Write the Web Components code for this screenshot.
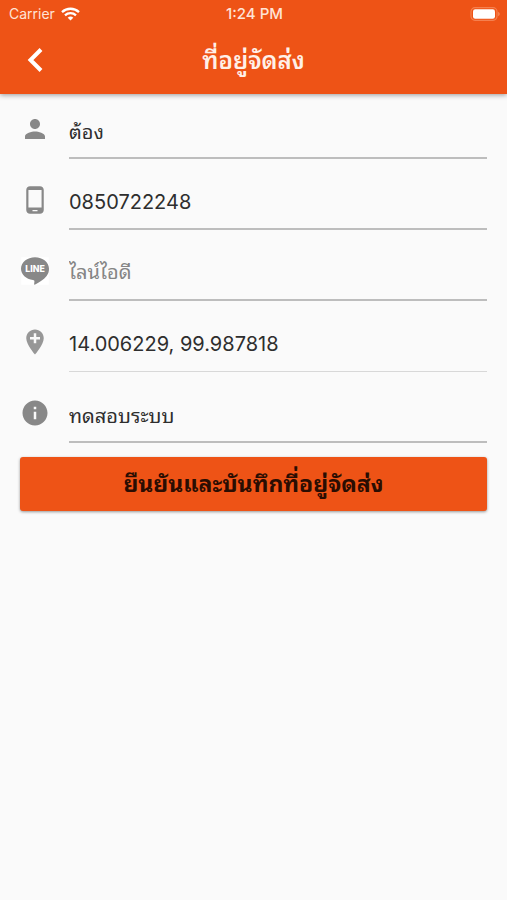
<!DOCTYPE html>
<html lang="th">
<head>
<meta charset="utf-8">
<meta name="viewport" content="width=device-width, initial-scale=1">
<title>ที่อยู่จัดส่ง</title>
<style>
body {
    margin: 0;
    min-height: 100vh;
    background-color: #fafafa;
    color: #2e2e2e;
    font-family: Inter, 'Noto Sans Thai Looped', Loma, Garuda, Waree, sans-serif;
}
</style>
</head>
<body>
<address-page></address-page>

<script>
const icons = {
    person: '<path d="M12 12c2.21 0 4-1.79 4-4s-1.79-4-4-4-4 1.79-4 4 1.79 4 4 4zm0 2c-2.67 0-8 1.34-8 4v2h16v-2c0-2.66-5.33-4-8-4z"/>',
    phone: '<path d="M16 1H8C6.34 1 5 2.34 5 4v16c0 1.66 1.34 3 3 3h8c1.66 0 3-1.34 3-3V4c0-1.66-1.34-3-3-3zm-2 20h-4v-1h4v1zm3.25-3H6.75V4h10.500v14z"/>',
    line: `<path fill="#fff" d="M1 1h22v22H1z"/>
        <path d="M12 1C5.800 1 .8 5 .8 10.200c0 4.600 4 8.200 9.600 9 .9.200 1.300.6 1.100 1.500l-.2 1.700c0 .5.300.7.800.4 2.600-1.400 6.900-4 9.200-6.900 1.300-1.600 1.900-3.400 1.900-5.700C23.200 5 18.200 1 12 1z"/>
        <text x="12" y="12.500" text-anchor="middle" font-size="7" font-weight="800" fill="#fff">LINE</text>`,
    place: '<path fill="#979797" d="M12 2C8.140 2 5 5.140 5 9c0 5.250 7 13 7 13s7-7.750 7-13c0-3.860-3.140-7-7-7zm4 8h-3v3h-2v-3H8V8h3V5h2v3h3v2z"/>',
    info: '<path d="M12 2C6.480 2 2 6.480 2 12s4.480 10 10 10 10-4.480 10-10S17.520 2 12 2zm1 15h-2v-6h2v6zm0-8h-2V7h2v2z"/>'
};

const statusTmpl = document.createElement('template');
statusTmpl.innerHTML = `
<style>
:host {
    display: grid;
    grid-template-columns: 1fr auto 1fr;
    align-items: center;
    height: 27px;
    padding: 0 7px 0 9px;
    font-size: 14px;
    line-height: 27px;
    color: #ffe3d6;
}
.carrier {
    display: flex;
    align-items: center;
    gap: 6px;
}
.time {
    font-size: 15px;
    font-weight: 500;
}
.battery {
    justify-self: end;
}
svg {
    display: block;
}
</style>
<div class="carrier">
    <span>Carrier</span>
    <svg width="19" height="14" viewBox="0 0 19 14" fill="none" stroke="#fff" stroke-width="2.300" aria-hidden="true">
        <path d="M1 5.200C5.800.600 13.200.600 18 5.200"/>
        <path d="M4 8.300c3.100-2.900 7.900-2.900 11 0"/>
        <path d="M6.700 10.700c1.600-1.500 4-1.500 5.600 0L9.500 13.600z" fill="#fff" stroke="none"/>
    </svg>
</div>
<span class="time">1:24 PM</span>
<svg class="battery" width="31" height="14" viewBox="0 0 31 14" aria-hidden="true">
    <rect x="2" y="0.700" width="26" height="12.600" rx="4" fill="none" stroke="#f5804f" stroke-width="1.200"/>
    <rect x="4" y="2.200" width="22" height="9.600" rx="2.200" fill="#fff"/>
    <path d="M29 4.800c2.400.9 2.400 3.500 0 4.400z" fill="#f5804f"/>
</svg>
`;

class StatusBar extends HTMLElement {
    constructor() {
        super();
        this.attachShadow({ mode: 'open' });
        this.shadowRoot.appendChild(statusTmpl.content.cloneNode(true));
    }
}
window.customElements.define('status-bar', StatusBar);

const appBarTmpl = document.createElement('template');
appBarTmpl.innerHTML = `
<style>
:host {
    display: block;
    background-color: #ee5316;
    box-shadow: 0 1px 5px rgba(0, 0, 0, .4);
}
nav {
    display: grid;
    grid-template-columns: 70px 1fr 70px;
    align-items: center;
    height: 67px;
}
button {
    display: grid;
    place-items: center;
    height: 60px;
    padding: 0;
    border: 0;
    background: none;
    color: #fff;
    cursor: pointer;
}
h1 {
    margin: 0;
    font-size: 24px;
    font-weight: 600;
    line-height: 36px;
    text-align: center;
    color: #fff0e8;
}
</style>
<status-bar></status-bar>
<nav>
    <button type="button" aria-label="ย้อนกลับ">
        <svg width="30" height="30" viewBox="0 0 30 30" fill="none" stroke="currentColor" stroke-width="4" aria-hidden="true">
            <path d="M21 3.500 10.500 14 21 24.500"/>
        </svg>
    </button>
    <h1><slot></slot></h1>
</nav>
`;

class AppBar extends HTMLElement {
    constructor() {
        super();
        this.attachShadow({ mode: 'open' });
        this.shadowRoot.appendChild(appBarTmpl.content.cloneNode(true));
    }
}
window.customElements.define('app-bar', AppBar);

const fieldTmpl = document.createElement('template');
fieldTmpl.innerHTML = `
<style>
:host {
    display: grid;
    grid-template-columns: 30px 1fr;
    column-gap: 19px;
    align-items: start;
}
label {
    padding-top: 8px;
}
svg {
    display: block;
    fill: #888;
}
input {
    box-sizing: border-box;
    width: 100%;
    height: 53px;
    padding: 0 0 4px;
    border: 0;
    border-bottom: 2px solid #bdbdbd;
    border-radius: 0;
    outline: 0;
    background: none;
    color: inherit;
    font: inherit;
    font-size: 20px;
    line-height: 24px;
}
:host([numeric]) input {
    padding-bottom: 2px;
}
:host([muted]) input {
    border-bottom: 1px solid #d8d8d8;
}
input::placeholder {
    color: #858585;
    opacity: 1;
}
</style>
<label for="field"><svg width="30" height="30" viewBox="0 0 24 24" aria-hidden="true"></svg></label>
<input id="field" type="text">
`;

class IconField extends HTMLElement {
    constructor() {
        super();
        this.attachShadow({ mode: 'open' });
        this.shadowRoot.appendChild(fieldTmpl.content.cloneNode(true));
    }

    connectedCallback() {
        const input = this.shadowRoot.querySelector('input');
        this.shadowRoot.querySelector('svg').innerHTML = icons[this.getAttribute('icon')];
        input.value = this.getAttribute('value') || '';
        input.placeholder = this.getAttribute('placeholder') || '';
        input.setAttribute('aria-label', this.getAttribute('label'));
    }
}
window.customElements.define('icon-field', IconField);

const submitTmpl = document.createElement('template');
submitTmpl.innerHTML = `
<style>
:host {
    display: block;
}
button {
    display: block;
    width: 100%;
    height: 54px;
    padding: 0;
    border: 0;
    border-radius: 3px;
    background-color: #ee5316;
    box-shadow: 0 1px 3px rgba(0, 0, 0, .4);
    color: #2a0d02;
    font: inherit;
    font-size: 23px;
    font-weight: 700;
    line-height: 36px;
    cursor: pointer;
}
</style>
<button type="button"><slot></slot></button>
`;

class SubmitButton extends HTMLElement {
    constructor() {
        super();
        this.attachShadow({ mode: 'open' });
        this.shadowRoot.appendChild(submitTmpl.content.cloneNode(true));
    }
}
window.customElements.define('submit-button', SubmitButton);

const pageTmpl = document.createElement('template');
pageTmpl.innerHTML = `
<style>
:host {
    display: block;
}
main {
    padding: 12px 20px;
}
.fields {
    display: grid;
    gap: 18px;
    margin-bottom: 14px;
}
</style>
<app-bar>ที่อยู่จัดส่ง</app-bar>
<main>
    <div class="fields">
        <icon-field icon="person" label="ชื่อ" value="ต้อง"></icon-field>
        <icon-field icon="phone" label="โทรศัพท์" value="0850722248" numeric></icon-field>
        <icon-field icon="line" label="ไลน์ไอดี" placeholder="ไลน์ไอดี"></icon-field>
        <icon-field icon="place" label="พิกัด" value="14.006229, 99.987818" numeric muted></icon-field>
        <icon-field icon="info" label="รายละเอียด" value="ทดสอบระบบ"></icon-field>
    </div>
    <submit-button>ยืนยันและบันทึกที่อยู่จัดส่ง</submit-button>
</main>
`;

class AddressPage extends HTMLElement {
    constructor() {
        super();
        this.attachShadow({ mode: 'open' });
        this.shadowRoot.appendChild(pageTmpl.content.cloneNode(true));
    }
}
window.customElements.define('address-page', AddressPage);
</script>
</body>
</html>
